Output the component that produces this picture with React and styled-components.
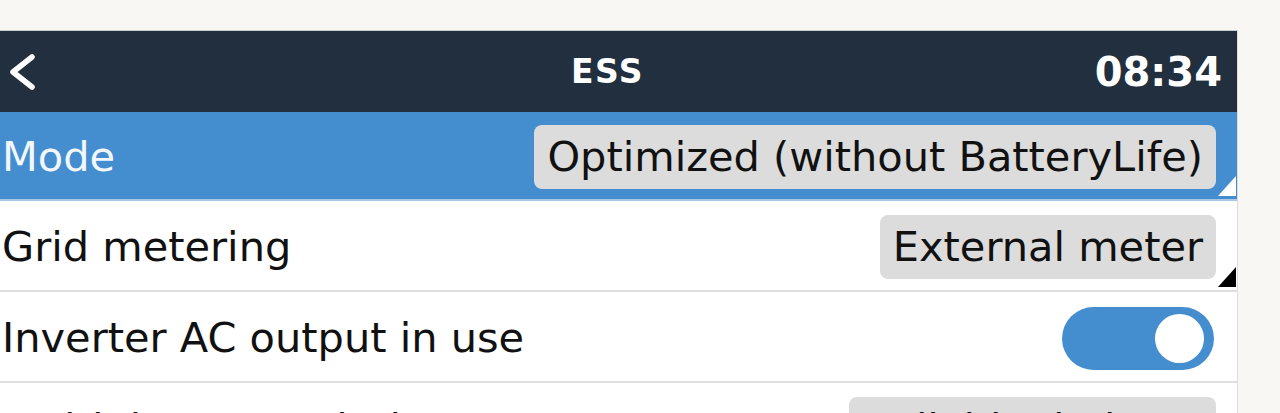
import React from 'react';
import styled, { createGlobalStyle } from 'styled-components';

const GlobalStyle = createGlobalStyle`
  html, body {
    margin: 0;
    padding: 0;
    background: #f8f7f4;
    font-family: "DejaVu Sans", "Liberation Sans", sans-serif;
  }
`;

const Page = styled.div`
  padding-top: 30px;
  height: 413px;
  box-sizing: border-box;
  overflow: hidden;
`;

const Panel = styled.div`
  width: 1238px;
  box-sizing: border-box;
  border-top: 1px solid #c9cbcf;
  border-right: 1px solid #dcdcdc;
  background: #fff;
`;

const Header = styled.div`
  height: 81px;
  background: #212f3e;
  color: #fff;
  display: grid;
  grid-template-columns: 1fr auto 1fr;
  align-items: center;
  padding: 0 15px 0 5px;
`;

const Back = styled.svg`
  width: 30px;
  height: 42px;
  display: block;
`;

const Title = styled.div`
  font-weight: 700;
  font-size: 33px;
  letter-spacing: 1.5px;
  margin-right: 12px;
`;

const Clock = styled.div`
  justify-self: end;
  font-weight: 700;
  font-size: 40px;
`;

const Row = styled.div`
  position: relative;
  height: ${p => p.$h || 91}px;
  box-sizing: border-box;
  display: flex;
  align-items: center;
  justify-content: space-between;
  padding: 2px 21px 0 2px;
  background: ${p => (p.$selected ? '#448ed0' : '#fff')};
  color: ${p => (p.$selected ? '#f2f7fc' : '#111')};
  border-bottom: 2px solid ${p => (p.$selected ? '#a9c9e6' : '#dedede')};
  font-size: 41.5px;
  ${p =>
    p.$corner &&
    `
    &::after {
      content: '';
      position: absolute;
      right: 1px;
      bottom: 3px;
      width: 0;
      height: 0;
      border-left: 18px solid transparent;
      border-bottom: 20px solid ${p.$corner};
    }
  `}
`;

const Label = styled.span`
  white-space: nowrap;
`;

const Pill = styled.span`
  display: flex;
  align-items: center;
  height: 64px;
  padding: 0 13px;
  border-radius: 8px;
  background: #dcdcdc;
  color: #111;
  white-space: nowrap;
`;

const Switch = styled.div`
  width: 152px;
  height: 63px;
  border-radius: 32px;
  background: #448ed0;
  display: flex;
  align-items: center;
  justify-content: flex-end;
  padding-right: 10px;
  box-sizing: border-box;
  margin-right: 2px;
  margin-top: 2px;
`;

const Knob = styled.div`
  width: 49px;
  height: 49px;
  border-radius: 50%;
  background: #fff;
`;

export default function App() {
  return (
    <Page>
      <GlobalStyle />
      <Panel>
        <Header>
          <Back viewBox="0 0 30 42">
            <path d="M27 6 L8 21 L27 36" fill="none" stroke="#fff" strokeWidth="5.5" strokeLinecap="round" strokeLinejoin="round" />
          </Back>
          <Title>ESS</Title>
          <Clock>08:34</Clock>
        </Header>
        <Row $selected $h={89} $corner="#fff">
          <Label>Mode</Label>
          <Pill>Optimized (without BatteryLife)</Pill>
        </Row>
        <Row $corner="#000">
          <Label>Grid metering</Label>
          <Pill>External meter</Pill>
        </Row>
        <Row>
          <Label>Inverter AC output in use</Label>
          <Switch>
            <Knob />
          </Switch>
        </Row>
        <Row>
          <Label>Multiphase regulation</Label>
          <Pill>Individual phase</Pill>
        </Row>
      </Panel>
    </Page>
  );
}
